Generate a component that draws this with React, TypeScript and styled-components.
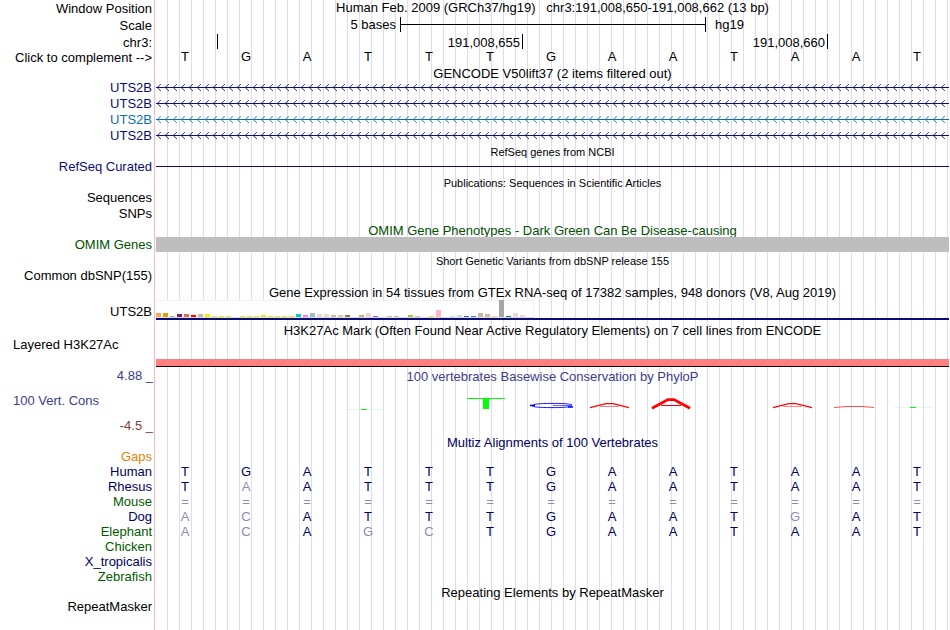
import { useState } from 'react'
import type { ReactNode } from 'react'
import styled, { createGlobalStyle } from 'styled-components'

const GlobalStyle = createGlobalStyle`
  body {
    margin: 0;
    background: #fff;
  }
`

const Browser = styled.main`
  box-sizing: border-box;
  min-height: 100vh;
  overflow: hidden;
  padding-right: 1px;
  font-family: 'Liberation Sans', Arial, Helvetica, sans-serif;
  font-size: 13px;
  line-height: 17px;
  color: #000;
  white-space: pre;
  background-image: linear-gradient(to right, #fff 154px, #ffb4b4 154px, #ffb4b4 155px, #fff 155px, #fff 156px, transparent 156px),
    repeating-linear-gradient(to right, transparent 0, transparent 11px, #dcdcf5 11px, #dcdcf5 12px);
`

const Row = styled.div<{ $height: number }>`
  display: grid;
  grid-template-columns: 156px minmax(0, 1fr);
  height: ${(props) => props.$height}px;
`

const LabelCell = styled.div<{ $color?: string; $left?: boolean; $top?: number }>`
  padding: ${(props) => props.$top || 0}px 4px 0 13px;
  text-align: ${(props) => (props.$left ? 'left' : 'right')};
  color: ${(props) => props.$color || '#000'};
`

const LabelButton = styled.button`
  display: block;
  margin-left: auto;
  padding: 0;
  border: 0;
  background: none;
  font: inherit;
  color: inherit;
  white-space: nowrap;
  cursor: pointer;
`

const Data = styled.div`
  min-width: 0;
`

const Title = styled.div<{ $color?: string; $small?: boolean; $line?: number }>`
  text-align: center;
  font-size: ${(props) => (props.$small ? 11 : 13)}px;
  line-height: ${(props) => props.$line || 17}px;
  color: ${(props) => props.$color || '#000'};
`

const Strip = styled.div<{ $tight?: boolean }>`
  display: grid;
  grid-template-columns: repeat(13, minmax(0, 1fr));
  line-height: ${(props) => (props.$tight ? 15 : 17)}px;
`

const Base = styled.span<{ $faded?: boolean; $color?: string }>`
  padding-right: 3px;
  text-align: center;
  color: ${(props) => (props.$faded ? '#8c8cb4' : props.$color || '#000')};
`

const ScaleBar = styled.div`
  display: grid;
  grid-template-columns: 244fr 306fr 243fr;
  line-height: 15px;
`

const ScaleText = styled.span<{ $right?: boolean }>`
  padding: 0 4px 0 9px;
  text-align: ${(props) => (props.$right ? 'right' : 'left')};
`

const ScaleLine = styled.div`
  display: flex;
  align-items: center;
  height: 15px;
  border: solid #000;
  border-width: 0 1px;

  &::before {
    content: '';
    flex: 1;
    height: 1px;
    background: #000;
  }
`

const Ruler = styled.div`
  display: grid;
  grid-template-columns: 62fr 305fr 305fr 121fr;
`

const Tick = styled.span`
  height: 15px;
  padding-right: 2px;
  border-right: 1px solid #000;
  text-align: right;
`

const Drawing = styled.svg`
  display: block;
  width: 100%;
`

const Bar = styled.div<{ $color: string; $height: number; $top: number }>`
  height: ${(props) => props.$height}px;
  margin-top: ${(props) => props.$top}px;
  background: ${(props) => props.$color};
`

const SignalBar = styled.div`
  height: 7px;
  margin-top: 23px;
  border-bottom: 1px solid #14000a;
  background: #ff8080;
`

const Expression = styled.div`
  border-bottom: 2px solid #0c0c78;
`

const TissueBars = styled.div`
  box-sizing: border-box;
  display: flex;
  align-items: flex-end;
  gap: 2px;
  width: 378px;
  height: 18px;
  border-bottom: 1px solid #dcdcdc;
  background: #fff;
  box-shadow: inset 0 1px #f2f2f2, inset -1px 0 #f2f2f2;
`

const Tissue = styled.span`
  width: 5px;
`

const Limits = styled.div`
  display: grid;
  grid-auto-rows: 25px;
  padding: 0 3px 0 13px;
`

const Limit = styled.span<{ $color: string; $left?: boolean }>`
  text-align: ${(props) => (props.$left ? 'left' : 'right')};
  color: ${(props) => props.$color};
`

const Conservation = styled.div`
  display: grid;
  gap: 10px;
  align-content: start;
  padding-top: 1px;
`

const NAVY = '#0c0c78'
const DEEP_BLUE = '#000064'
const GREEN = '#005a00'

const sequence = 'TGATTTGAATAAT'
const complement: Record<string, string> = { A: 'T', T: 'A', C: 'G', G: 'C' }

const transcripts = [
  { id: 1, color: NAVY },
  { id: 2, color: NAVY },
  { id: 3, color: '#0c6eb4' },
  { id: 4, color: NAVY },
]

const species = [
  { name: 'Gaps', color: '#e68200', bases: '' },
  { name: 'Human', color: DEEP_BLUE, bases: 'TGATTTGAATAAT' },
  { name: 'Rhesus', color: DEEP_BLUE, bases: 'TAATTTGAATAAT' },
  { name: 'Mouse', color: GREEN, bases: '=============' },
  { name: 'Dog', color: DEEP_BLUE, bases: 'ACATTTGAATGAT' },
  { name: 'Elephant', color: GREEN, bases: 'ACAGCTGAATAAT' },
  { name: 'Chicken', color: GREEN, bases: '' },
  { name: 'X_tropicalis', color: DEEP_BLUE, bases: '' },
  { name: 'Zebrafish', color: GREEN, bases: '' },
]

// [colour, height] for each of the 54 GTEx tissues
const tissues: [string, number][] = [
  ['#ffa54f', 4], ['#ee9a00', 4], ['#8fbc8f', 1], ['#8b1c62', 3], ['#ee6a50', 3], ['#ff0000', 2],
  ['#cdb79e', 3], ['#eeee00', 3], ['#eeee00', 1], ['#eeee00', 1], ['#eeee00', 1], ['#eeee00', 0],
  ['#eeee00', 1], ['#eeee00', 1], ['#eeee00', 1], ['#eeee00', 2], ['#eeee00', 1], ['#eeee00', 1],
  ['#eeee00', 1], ['#eeee00', 1], ['#00cdcd', 3], ['#ee82ee', 2], ['#9ac0cd', 4], ['#eed5d2', 3],
  ['#eed5d2', 3], ['#cdb79e', 2], ['#eec591', 2], ['#8b7355', 2], ['#8b7355', 0], ['#cdaa7d', 2],
  ['#eed5d2', 4], ['#b452cd', 1], ['#7a378b', 0], ['#cdb79e', 1], ['#cdb79e', 1], ['#cdb79e', 0],
  ['#9acd32', 2], ['#cdb79e', 1], ['#7a67ee', 0], ['#ffd700', 1], ['#ffb6c1', 7], ['#cd9b1d', 0],
  ['#b4eeb4', 1], ['#d9d9d9', 2], ['#3a5fcd', 1], ['#1e90ff', 1], ['#cdb79e', 4], ['#cdb79e', 3],
  ['#ffd39b', 1], ['#a6a6a6', 17], ['#008b45', 1], ['#eed5d2', 4], ['#eed5d2', 2], ['#ff00ff', 0],
]

interface TitleRowProps {
  height: number
  color?: string
  small?: boolean
  line?: number
  children: ReactNode
}

const TitleRow = ({ height, color, small, line, children }: TitleRowProps) => (
  <Row $height={height}>
    <LabelCell />
    <Title $color={color} $small={small} $line={line}>
      {children}
    </Title>
  </Row>
)

const Transcript = ({ id, color }: { id: number; color: string }) => (
  <Drawing height={16} aria-hidden="true">
    <defs>
      <pattern id={`arrows-${id}`} width={8} height={16} patternUnits="userSpaceOnUse">
        <path d="M4.8 5L1.3 8.5L4.8 12" fill="none" stroke={color} strokeWidth={0.9} />
      </pattern>
    </defs>
    <rect width="100%" height={16} fill={`url(#arrows-${id})`} />
    <rect width="100%" y={8} height={1} fill={color} />
  </Drawing>
)

// PhyloP marks, drawn on a 793 wide canvas
const PhyloP = () => (
  <Drawing height={20} viewBox="0 0 793 20" preserveAspectRatio="none" role="img" aria-label="PhyloP conservation scores">
    <g fill="#00ff00">
      <rect x={190} y={14} width={38} height={1} opacity={0.12} />
      <rect x={205} y={14} width={6} height={1} />
      <rect x={311} y={3} width={38} height={1} />
      <rect x={327} y={3} width={6} height={11} />
      <rect x={738} y={12} width={38} height={1} opacity={0.12} />
      <rect x={754} y={12} width={6} height={1} />
    </g>
    <g fill="none" stroke="#0000ff">
      <path d="M416 9.8C413 8.6 404 8.4 396 8.4C384 8.4 376 9.2 376 10.6C376 12 384 12.6 396 12.6C405 12.6 412 12.3 415 11.2" strokeWidth={0.9} />
      <path d="M397 10.5H416" strokeWidth={0.6} />
      <path d="M374 10.5H379M412 12H417" strokeWidth={1.6} />
    </g>
    <g fill="none" stroke="#ff0000">
      <path d="M434 12.6L450 8.6H457L473 12.6" strokeWidth={1.2} />
      <path d="M444 11.5H463" strokeWidth={0.5} />
      <path d="M496 13.3L512 4.6H518L534 13.3" strokeWidth={2.8} />
      <path d="M505 10.5H525" strokeWidth={1} />
      <path d="M617 12.6L633 8.6H640L656 12.6" strokeWidth={1.2} />
      <path d="M627 11.5H646" strokeWidth={0.5} />
      <path d="M678 12.5L691 11.5H706L718 12.5" strokeWidth={0.7} />
    </g>
  </Drawing>
)

export default function App() {
  const [complemented, setComplemented] = useState(false)

  return (
    <>
      <GlobalStyle />
      <Browser>
        <Row $height={17}>
          <LabelCell>Window Position</LabelCell>
          <Title $line={15}>{'Human Feb. 2009 (GRCh37/hg19)   chr3:191,008,650-191,008,662 (13 bp)'}</Title>
        </Row>
        <Row $height={17}>
          <LabelCell>Scale</LabelCell>
          <ScaleBar>
            <ScaleText $right>5 bases</ScaleText>
            <ScaleLine />
            <ScaleText>hg19</ScaleText>
          </ScaleBar>
        </Row>
        <Row $height={15}>
          <LabelCell>chr3:</LabelCell>
          <Ruler>
            <Tick />
            <Tick>191,008,655</Tick>
            <Tick>191,008,660</Tick>
          </Ruler>
        </Row>
        <Row $height={16}>
          <LabelCell>
            <LabelButton type="button" onClick={() => setComplemented(!complemented)}>
              {'Click to complement -->'}
            </LabelButton>
          </LabelCell>
          <Strip $tight>
            {[...sequence].map((base, i) => (
              <Base key={i}>{complemented ? complement[base] : base}</Base>
            ))}
          </Strip>
        </Row>

        <TitleRow height={14}>GENCODE V50lift37 (2 items filtered out)</TitleRow>
        {transcripts.map(({ id, color }) => (
          <Row key={id} $height={16}>
            <LabelCell $color={color}>UTS2B</LabelCell>
            <Transcript id={id} color={color} />
          </Row>
        ))}

        <TitleRow height={15} small line={19}>
          RefSeq genes from NCBI
        </TitleRow>
        <Row $height={16}>
          <LabelCell $color={NAVY}>RefSeq Curated</LabelCell>
          <Data>
            <Bar $color={NAVY} $height={1} $top={8} />
          </Data>
        </Row>

        <TitleRow height={15} small line={19}>
          Publications: Sequences in Scientific Articles
        </TitleRow>
        <Row $height={16}>
          <LabelCell>Sequences</LabelCell>
        </Row>
        <Row $height={17}>
          <LabelCell>SNPs</LabelCell>
        </Row>

        <TitleRow height={14} color="#005000">
          OMIM Gene Phenotypes - Dark Green Can Be Disease-causing
        </TitleRow>
        <Row $height={16}>
          <LabelCell $color="#005000">OMIM Genes</LabelCell>
          <Data>
            <Bar $color="#bebebe" $height={15} $top={1} />
          </Data>
        </Row>

        <TitleRow height={15} small line={19}>
          Short Genetic Variants from dbSNP release 155
        </TitleRow>
        <Row $height={17}>
          <LabelCell>Common dbSNP(155)</LabelCell>
        </Row>

        <TitleRow height={16}>
          Gene Expression in 54 tissues from GTEx RNA-seq of 17382 samples, 948 donors (V8, Aug 2019)
        </TitleRow>
        <Row $height={22}>
          <LabelCell $top={3}>UTS2B</LabelCell>
          <Data>
            <Expression>
              <TissueBars>
                {tissues.map(([color, height], i) => (
                  <Tissue key={i} style={{ height, background: color }} />
                ))}
              </TissueBars>
            </Expression>
          </Data>
        </Row>

        <TitleRow height={14}>
          H3K27Ac Mark (Often Found Near Active Regulatory Elements) on 7 cell lines from ENCODE
        </TitleRow>
        <Row $height={31}>
          <LabelCell $left>Layered H3K27Ac</LabelCell>
          <Data>
            <SignalBar />
          </Data>
        </Row>

        <Row $height={67}>
          <Limits>
            <Limit $color="#3c3c8c">4.88 _</Limit>
            <Limit $color="#3c3c8c" $left>
              100 Vert. Cons
            </Limit>
            <Limit $color="#8c3c3c">-4.5 _</Limit>
          </Limits>
          <Conservation>
            <Title $color="#3c3c8c">100 vertebrates Basewise Conservation by PhyloP</Title>
            <PhyloP />
          </Conservation>
        </Row>

        <TitleRow height={14} color={DEEP_BLUE}>
          Multiz Alignments of 100 Vertebrates
        </TitleRow>
        {species.map(({ name, color, bases }) => (
          <Row key={name} $height={15}>
            <LabelCell $color={color}>{name}</LabelCell>
            <Strip>
              {[...bases].map((base, i) => (
                <Base key={i} $color={DEEP_BLUE} $faded={base !== sequence[i]}>
                  {base}
                </Base>
              ))}
            </Strip>
          </Row>
        ))}

        <TitleRow height={15} line={19}>
          Repeating Elements by RepeatMasker
        </TitleRow>
        <Row $height={17}>
          <LabelCell>RepeatMasker</LabelCell>
        </Row>
      </Browser>
    </>
  )
}
